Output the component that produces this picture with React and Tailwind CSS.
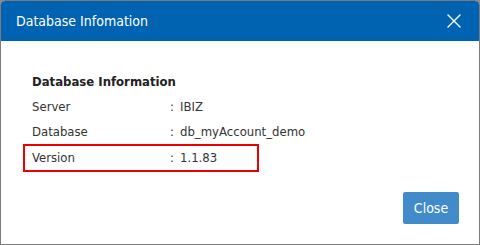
import { X } from "lucide-react";

const rows = [
  { label: "Server", value: "IBIZ" },
  { label: "Database", value: "db_myAccount_demo" },
];

function InfoRow({ label, value }) {
  return (
    <div className="flex items-center h-[25px]">
      <span className="w-[138px]">{label}</span>
      <span className="w-[10px]">:</span>
      <span>{value}</span>
    </div>
  );
}

export default function App() {
  return (
    <div className="w-[480px] h-[245px] bg-[#8c8c8c] font-['DejaVu_Sans_Condensed','DejaVu_Sans',sans-serif]">
      <div className="w-full h-full flex flex-col bg-white border border-[#7b7b7b] rounded-t-[5px] overflow-hidden">
        <div className="h-[40px] shrink-0 bg-[#0063b1] flex items-center justify-between pl-[15px] pr-[13px]">
          <span className="text-white text-[14px]">Database Infomation</span>
          <X className="w-[24px] h-[24px] text-white" strokeWidth={1.4} />
        </div>

        <div className="flex-1 flex flex-col pl-[31px] pt-[30px] text-[13px] text-[#333]">
          <h2 className="font-bold text-[13px] text-[#222] h-[22px] flex items-center">Database Information</h2>
          <div className="mt-[1px]">
            {rows.map((r) => (
              <InfoRow key={r.label} label={r.label} value={r.value} />
            ))}
          </div>
          <div className="flex items-center h-[28px] w-[236px] -ml-[9px] pl-[7px] border-2 border-[#ee0000]">
            <span className="w-[138px]">Version</span>
            <span className="w-[10px]">:</span>
            <span>1.1.83</span>
          </div>

          <div className="flex justify-end mt-auto pr-[20px] pb-[20px]">
            <button className="w-[56px] h-[32px] bg-[#428bca] text-white text-[14px] rounded-[2px]">
              Close
            </button>
          </div>
        </div>
      </div>
    </div>
  );
}
